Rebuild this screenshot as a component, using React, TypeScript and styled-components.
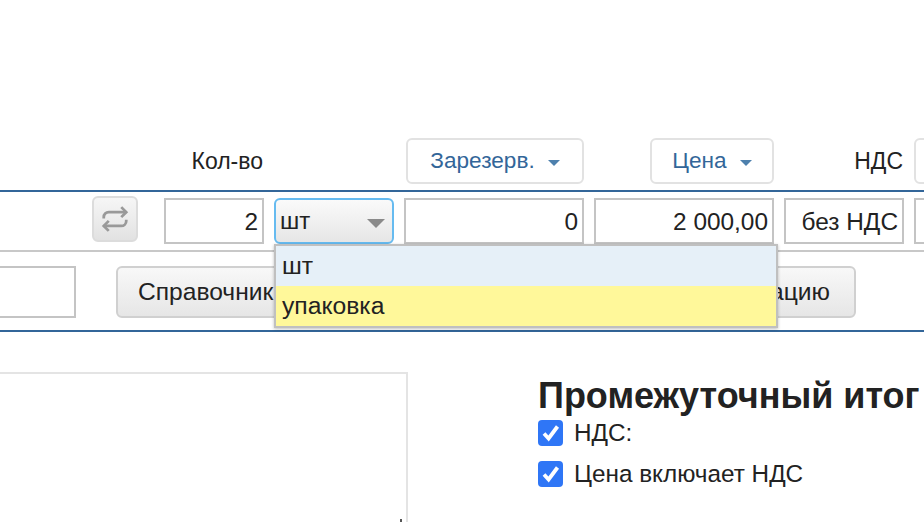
import React from "react";
import styled, { createGlobalStyle } from "styled-components";

const Global = createGlobalStyle`
  html, body { margin: 0; padding: 0; background: #fff; }
  body { font-family: "Liberation Sans", Arial, sans-serif; color: #222; }
`;

const Page = styled.div`
  width: 924px;
  height: 522px;
  overflow: hidden;
  padding-top: 138px;
  box-sizing: border-box;
`;

const COLUMNS = "154px 100px 120px 180px 180px 120px 100px";

const HeaderRow = styled.div`
  display: grid;
  grid-template-columns: ${COLUMNS};
  column-gap: 10px;
  height: 46px;
  align-items: center;
`;

const HeadLabel = styled.div<{ $col: number }>`
  grid-column: ${(p) => p.$col};
  justify-self: end;
  font-size: 23px;
  white-space: nowrap;
  padding-right: 1px;
`;

const HeadButton = styled.button<{ $col: number; $width: number }>`
  grid-column: ${(p) => p.$col};
  justify-self: end;
  width: ${(p) => p.$width}px;
  height: 46px;
  box-sizing: border-box;
  border: 2px solid #e2e2e2;
  border-radius: 6px;
  background: #fff;
  color: #336699;
  font: 22.6px "Liberation Sans", Arial, sans-serif;
  display: flex;
  align-items: center;
  justify-content: center;
  gap: 13px;
  padding: 0;
`;

const Caret = styled.span`
  width: 0;
  height: 0;
  margin-top: 4px;
  border-left: 6px solid transparent;
  border-right: 6px solid transparent;
  border-top: 6px solid #4d80ad;
`;

const OrderPanel = styled.div`
  position: relative;
  margin-top: 6px;
  height: 142px;
  box-sizing: border-box;
  border-top: 2px solid #336699;
  border-bottom: 2px solid #336699;
`;

const FieldRow = styled.div`
  display: grid;
  grid-template-columns: ${COLUMNS};
  column-gap: 10px;
  height: 60px;
  padding-top: 4px;
  box-sizing: border-box;
  border-bottom: 2px solid #c8c8c8;
`;

const SwapButton = styled.button`
  justify-self: end;
  margin-right: 16px;
  width: 46px;
  height: 46px;
  box-sizing: border-box;
  padding: 0;
  border: 2px solid #dcdcdc;
  border-radius: 6px;
  background: linear-gradient(#f6f6f6, #e2e2e2);
  display: flex;
  align-items: center;
  justify-content: center;
  color: #999;
`;

const Field = styled.div`
  height: 46px;
  margin-top: 2px;
  box-sizing: border-box;
  border: 2px solid #c4c4c4;
  background: #fff;
  font-size: 24.4px;
  display: flex;
  align-items: center;
  justify-content: flex-end;
  padding: 2px 4px 0 0;
  white-space: nowrap;
`;

const SelectBox = styled.div`
  height: 46px;
  margin-top: 2px;
  box-sizing: border-box;
  border: 2px solid #66bbf0;
  border-radius: 6px;
  background: linear-gradient(#fafafa, #e6e6e6);
  font-size: 24px;
  display: flex;
  align-items: center;
  justify-content: space-between;
  padding: 0 7px 0 4px;
`;

const SelectCaret = styled.span`
  width: 0;
  height: 0;
  margin-top: 4px;
  border-left: 9px solid transparent;
  border-right: 9px solid transparent;
  border-top: 9px solid #8a8a8a;
`;

const ActionRow = styled.div`
  display: flex;
  align-items: flex-start;
  height: 78px;
  padding-top: 14px;
  box-sizing: border-box;
`;

const SearchInput = styled.div`
  width: 78px;
  margin-left: -2px;
  height: 52px;
  box-sizing: border-box;
  border: 2px solid #c4c4c4;
  background: #fff;
`;

const ActionButton = styled.button<{ $width: number; $gap: number }>`
  width: ${(p) => p.$width}px;
  margin-left: ${(p) => p.$gap}px;
  height: 52px;
  box-sizing: border-box;
  border: 2px solid #d0d0d0;
  border-radius: 6px;
  background: linear-gradient(#f8f8f8, #e6e6e6);
  font: 24.6px "Liberation Sans", Arial, sans-serif;
  color: #222;
  white-space: nowrap;
  overflow: hidden;
  display: flex;
  align-items: center;
  padding: 0 0 0 20px;
`;

const ActionButtonEnd = styled(ActionButton)`
  justify-content: flex-end;
  padding: 0 24px 0 0;
`;

const Dropdown = styled.ul`
  position: absolute;
  left: 274px;
  top: 52px;
  width: 504px;
  height: 84px;
  margin: 0;
  padding: 0;
  list-style: none;
  box-sizing: border-box;
  border: 2px solid #c0c0c0;
  box-shadow: 0 1px 3px rgba(0, 0, 0, 0.25);
  font-size: 24.7px;
`;

const Option = styled.li<{ $bg: string }>`
  height: 40px;
  box-sizing: border-box;
  padding-left: 6px;
  display: flex;
  align-items: center;
  background: ${(p) => p.$bg};
`;

const Bottom = styled.div`
  display: flex;
  margin-top: 40px;
`;

const NotesBox = styled.div`
  position: relative;
  width: 408px;
  height: 160px;
  box-sizing: border-box;
  border: 2px solid #e4e4e4;
  border-left: none;
  flex: none;
`;

const ResizeMark = styled.span`
  position: absolute;
  right: 4px;
  top: 145px;
  width: 2px;
  height: 3px;
  background: #555;
`;

const Summary = styled.div`
  margin-left: 130px;
  white-space: nowrap;
`;

const Title = styled.h2`
  margin: 4px 0 0;
  font-size: 36px;
  line-height: 40px;
  font-weight: 700;
  color: #222;
`;

const CheckRow = styled.label<{ $top: number }>`
  display: flex;
  align-items: center;
  gap: 11px;
  height: 26px;
  margin-top: ${(p) => p.$top}px;
  font-size: 24.3px;
`;

const CheckBox = styled.span`
  width: 25px;
  height: 26px;
  border-radius: 4px;
  background: #2f76f6;
  display: flex;
  align-items: center;
  justify-content: center;
`;

const Check = () => (
  <CheckBox>
    <svg width="20" height="20" viewBox="0 0 20 20" fill="none">
      <path d="M3 10.5 L7.6 15.5 L16.5 3.5" stroke="#fff" strokeWidth="3.8" />
    </svg>
  </CheckBox>
);

export default function App() {
  return (
    <Page>
      <Global />
      <HeaderRow>
        <HeadLabel $col={2}>Кол-во</HeadLabel>
        <HeadButton $col={4} $width={178}>
          Зарезерв.
          <Caret />
        </HeadButton>
        <HeadButton $col={5} $width={124}>
          Цена
          <Caret />
        </HeadButton>
        <HeadLabel $col={6}>НДС</HeadLabel>
        <HeadButton $col={7} $width={100} />
      </HeaderRow>
      <OrderPanel>
        <FieldRow>
          <SwapButton>
            <svg width="30" height="30" viewBox="0 0 24 24" fill="none" stroke="currentColor" strokeWidth="2.2">
              <path d="M17 2.5l4 4-4 4" />
              <path d="M3 11.5v-1a4 4 0 0 1 4-4h14" />
              <path d="M7 21.5l-4-4 4-4" />
              <path d="M21 12.5v1a4 4 0 0 1-4 4H3" />
            </svg>
          </SwapButton>
          <Field>2</Field>
          <SelectBox>
            шт
            <SelectCaret />
          </SelectBox>
          <Field>0</Field>
          <Field>2 000,00</Field>
          <Field>без НДС</Field>
          <Field />
        </FieldRow>
        <ActionRow>
          <SearchInput />
          <ActionButton $width={200} $gap={40}>Справочник</ActionButton>
          <ActionButtonEnd $width={520} $gap={20}>Создать спецификацию</ActionButtonEnd>
        </ActionRow>
        <Dropdown>
          <Option $bg="#e6f0f8">шт</Option>
          <Option $bg="#fff89a">упаковка</Option>
        </Dropdown>
      </OrderPanel>
      <Bottom>
        <NotesBox>
          <ResizeMark />
        </NotesBox>
        <Summary>
          <Title>Промежуточный итог</Title>
          <CheckRow $top={4}>
            <Check />
            НДС:
          </CheckRow>
          <CheckRow $top={15}>
            <Check />
            Цена включает НДС
          </CheckRow>
        </Summary>
      </Bottom>
    </Page>
  );
}
